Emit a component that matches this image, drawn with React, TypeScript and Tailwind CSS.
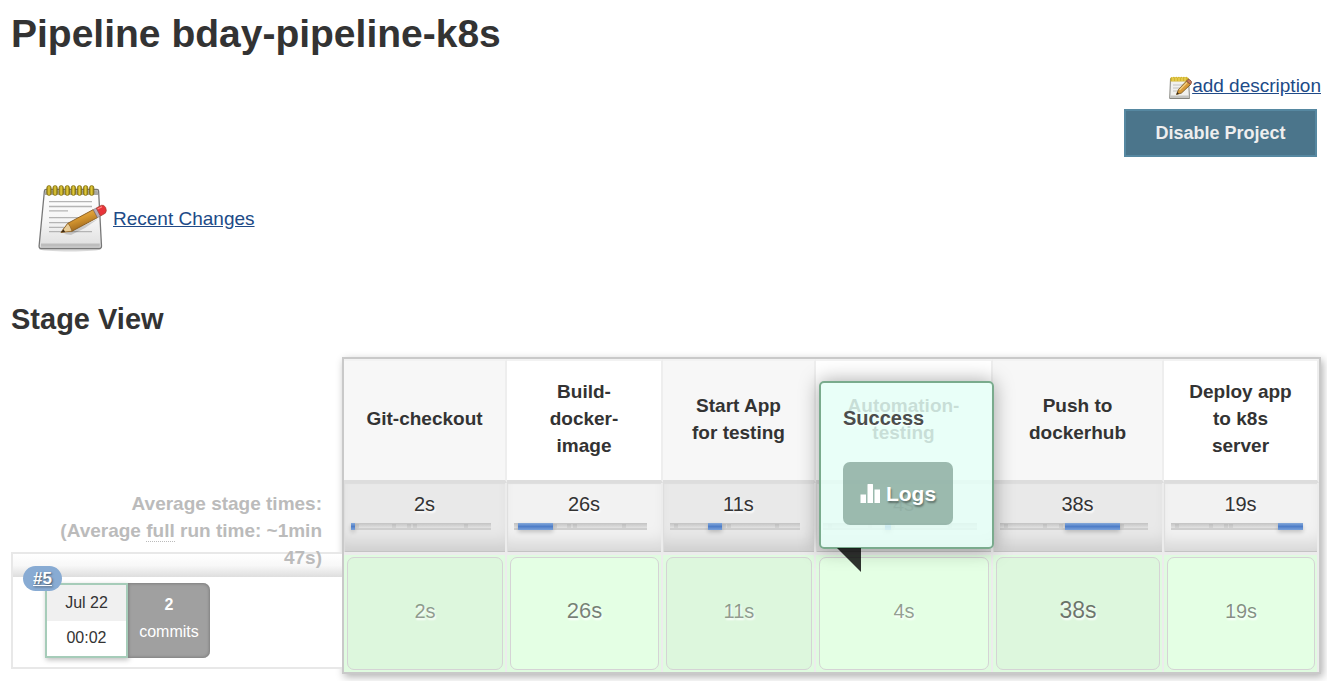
import React from "react";

type Stage = {
  name: string;
  average: string;
  start: number;
  span: number;
  run: string;
  runClass: string;
  colClass: string;
};

const stages: Stage[] = [
  { name: "Git-checkout", average: "2s", start: 0, span: 3, run: "2s", runClass: "text-[20px] text-black/40", colClass: "w-[163px]" },
  { name: "Build-docker-image", average: "26s", start: 3, span: 26, run: "26s", runClass: "text-[22px] text-black/50", colClass: "w-[156px]" },
  { name: "Start App for testing", average: "11s", start: 29, span: 11, run: "11s", runClass: "text-[20px] text-black/40", colClass: "w-[153px]" },
  { name: "Automation-testing", average: "4s", start: 40, span: 4, run: "4s", runClass: "text-[20px] text-black/40", colClass: "w-[177px]" },
  { name: "Push to dockerhub", average: "38s", start: 44, span: 37, run: "38s", runClass: "text-[23px] text-black/55", colClass: "w-[171px]" },
  { name: "Deploy app to k8s server", average: "19s", start: 81, span: 19, run: "19s", runClass: "text-[20px] text-black/45", colClass: "w-[155px]" },
];

function NotepadIcon({ className, id }: { className: string; id: string }) {
  return (
    <svg className={className} viewBox="0 0 70 70" aria-hidden="true">
      <defs>
        <linearGradient id={`${id}-paper`} x1="0" y1="0" x2="0" y2="1">
          <stop offset="0" stopColor="#ffffff" />
          <stop offset="0.5" stopColor="#f6f6f6" />
          <stop offset="1" stopColor="#dedede" />
        </linearGradient>
        <linearGradient id={`${id}-wood`} x1="0" y1="0" x2="0.5" y2="1">
          <stop offset="0" stopColor="#efc46e" />
          <stop offset="0.5" stopColor="#d99a32" />
          <stop offset="1" stopColor="#96601a" />
        </linearGradient>
        <linearGradient id={`${id}-ring`} x1="0" y1="0" x2="1" y2="0">
          <stop offset="0" stopColor="#9b8410" />
          <stop offset="0.5" stopColor="#e3cc3c" />
          <stop offset="1" stopColor="#8c760d" />
        </linearGradient>
      </defs>
      <ellipse cx="33" cy="66" rx="31" ry="2.5" fill="#000" opacity="0.15" />
      <path d="M9 6.500H60Q61.500 6.500 61.600 8L64.500 63Q64.500 65.500 62.500 65.500H4Q2 65.500 2.100 63L7.400 8Q7.600 6.500 9 6.500Z" fill={`url(#${id}-paper)`} stroke="#777" strokeWidth="1.300" />
      <path d="M8.300 7.200H60.700L61.200 12H7.800Z" fill="#a9a9a4" />
      <path d="M4 60.500H62.800V63.800H4Z" fill="#bdbdbd" />
      <path d="M12 18.700H55M12 23.500H55M12 27.800H31M12 34.700H52M12 39.700H45M12 44.300H32M12 48.700H55" stroke="#b4b4b4" strokeWidth="1.300" />
      {[0, 1, 2, 3, 4, 5, 6, 7].map((n) => (
        <rect key={n} x={9.8 + n * 6.1} y="2.600" width="4.400" height="9.800" rx="2.200" fill={`url(#${id}-ring)`} stroke="#7d6a10" strokeWidth="0.700" />
      ))}
      <path d="M27 51L61 36L48 45L34 52Z" fill="#000" opacity="0.16" />
      <path d="M31 40.200L56.300 26.600L60.500 34.600L35 48.200L24 49.300Z" fill={`url(#${id}-wood)`} stroke="#85581c" strokeWidth="0.900" strokeLinejoin="round" />
      <path d="M31 40.200L33.300 43.800L35 48.200L24 49.300Z" fill="#e9cd98" stroke="#85581c" strokeWidth="0.600" />
      <path d="M26.500 46.200L28.200 48.900L24 49.300Z" fill="#3c2a14" />
      <path d="M56.300 26.600L59.300 25L63.500 33L60.500 34.600Z" fill="#b9adb8" stroke="#80747d" strokeWidth="0.600" />
      <path d="M59.300 25L64.500 22.300Q67 21.500 68.600 24.500Q70.100 28.200 68.300 30.200L63.500 33Z" fill="#e8343a" stroke="#a64434" strokeWidth="0.800" />
      <path d="M60.600 26L65 23.700" stroke="#ff8d86" strokeWidth="1.200" />
    </svg>
  );
}

function SmallNotepadIcon() {
  return (
    <svg className="mt-1 h-6 w-[23px]" viewBox="0 0 23 24" aria-hidden="true">
      <path d="M1.500 2.500H19.500L20.500 22.500H0.700Z" fill="#f1f1ee" stroke="#85857f" strokeWidth="1" />
      <path d="M1.500 19.500H20.300V22H1Z" fill="#c4c4c0" />
      <path d="M4 9H16M4 12H11M4 15H9" stroke="#c2c2c0" strokeWidth="1" />
      <path d="M1.500 2Q2.500 0.500 3.500 1.500Q5 0 6 1.500Q7.500 0 8.500 1.500Q10 0 11 1.500Q12.500 0 13.500 1.500Q15 0 16 1.500Q17.500 0 18.500 1.500L19.500 2V5.500H1.500Z" fill="#d4b62c" />
      <path d="M4 2V5M7 2V5M10 2V5M13 2V5M16 2V5" stroke="#f1dc68" strokeWidth="1" />
      <path d="M7.500 18.500L9.500 13.500L17.500 5L21.500 8.500L12.500 17Z" fill="#d89a38" stroke="#7b5a22" strokeWidth="0.900" />
      <path d="M10.500 14L18 6.500" stroke="#f4cf84" strokeWidth="1.200" />
      <path d="M7.500 18.500L8.400 16L10 17.700Z" fill="#33271a" />
      <path d="M17.500 5L19 3.600Q21 3 22.400 5.500Q22.800 7 21.500 8.500Z" fill="#c97a5c" stroke="#7d4a38" strokeWidth="0.800" />
    </svg>
  );
}

function LogsIcon() {
  return (
    <svg className="h-5 w-[22px]" viewBox="0 0 22 20" aria-hidden="true">
      <path d="M0.500 10.500H6V19H0.500ZM7.500 0.500Q7.500 0 8 0H12.500Q13 0 13 0.500V19H7.500ZM14.500 5.500H20V19H14.500Z" fill="#fff" />
    </svg>
  );
}

function StagePopover() {
  return (
    <div role="dialog" aria-label="Stage result" className="absolute bottom-full left-[3px] z-10 mb-[6px] w-[175px] text-left [text-shadow:1px_1px_1px_#fff]">
      <div className="flex h-[168px] flex-col items-start rounded-[5px] border-2 border-[#7aab8d] bg-[#e5fff7]/84 px-[22px] pt-[22px] shadow-[0_0_20px_rgba(0,0,0,0.35)]">
        <p className="text-[20px] leading-[27px] font-bold text-[#4a4d4c]">Success</p>
        <button type="button" className="mt-[30px] flex h-[63px] w-[110px] items-center justify-center gap-1 rounded-[7px] bg-[#7b9c90]/70 text-[21px] font-bold text-white [text-shadow:1px_2px_2px_rgba(0,0,0,0.4)]">
          <LogsIcon />
          Logs
        </button>
      </div>
      <svg className="absolute top-full left-[18px] -mt-px h-6 w-6" viewBox="0 0 24 24" aria-hidden="true">
        <path d="M0 0H24V24Z" fill="#000" opacity="0.8" />
      </svg>
    </div>
  );
}

function Timeline({ stage }: { stage: Stage }) {
  return (
    <div className="relative mt-[5px] mr-[14px] ml-[7px] h-[7px] border-b-2 border-[#cecece] bg-linear-to-b from-[#c3c3c3] to-[#e2e2e2]">
      {stages.slice(1).map((s) => (
        <span key={s.name} className="absolute top-px h-1 w-1 bg-black/6" style={{ left: `${s.start}%` }} />
      ))}
      <span
        className="absolute top-0 h-[7px] bg-linear-to-b from-[#85a9da] via-[#4f7ec8] to-[#7ba2da] shadow-[0_2px_4px_rgba(0,0,0,0.2)]"
        style={{ left: `${stage.start}%`, width: `${stage.span}%` }}
      />
    </div>
  );
}

function StageTable() {
  return (
    <div className="min-w-0 flex-1 border-2 border-[#c9c9c9] shadow-[2px_3px_8px_rgba(0,0,0,0.3)]">
      <table className="w-full table-fixed border-separate border-spacing-0 text-center">
        <colgroup>
          {stages.map((s) => (
            <col key={s.name} className={s.colClass} />
          ))}
        </colgroup>
        <thead>
          <tr>
            {stages.map((s) => (
              <th key={s.name} scope="col" className="h-[124px] border-t-2 border-r-2 border-b-3 border-t-[#f2f2f2] border-r-[#eee] border-b-[#ddd] px-5 pb-1 text-[19px] leading-[27px] font-bold odd:bg-[#f7f7f7] even:bg-white">
                {s.name}
              </th>
            ))}
          </tr>
        </thead>
        <tbody>
          <tr>
            {stages.map((s) => (
              <td key={s.name} className="h-[72px] border-r-2 border-b-3 border-[#ececec] pt-2 align-top text-[20px] leading-[27px] shadow-[inset_1px_1px_1px_#ddd,inset_0_-1px_0_#c4c4c4,inset_0_-18px_18px_-10px_rgba(0,0,0,0.13)] [text-shadow:1px_2px_2px_#fff] odd:bg-[#e9e9e9] even:bg-[#f2f2f2]">
                {s.average}
                <Timeline stage={s} />
              </td>
            ))}
          </tr>
          <tr>
            {stages.map((s) => (
              <td key={s.name} className="group relative h-[117px] border-r-2 border-[#ececec] bg-[#e0fbe0] py-[2px] pr-[2px] pl-[3px]">
                <div className={`flex h-[113px] items-center justify-center rounded-[7px] border border-[#d5d3d5] pb-[6px] [text-shadow:1px_2px_2px_#fff] group-odd:bg-[#ddf7dd] group-even:bg-[#e4ffe4] ${s.runClass}`}>
                  {s.run}
                </div>
                {s.name === "Automation-testing" && <StagePopover />}
              </td>
            ))}
          </tr>
        </tbody>
      </table>
    </div>
  );
}

function RunSummary() {
  return (
    <div className="flex w-[331px] shrink-0 flex-col justify-end pb-[5px]">
      <div className="relative z-10 -mb-[19px] pr-5 pl-5 text-right text-[19px] leading-[27px] font-bold text-[#bbb]">
        <p>Average stage times:</p>
        <p>
          (Average <abbr title="Complete runs only" className="border-b border-dotted border-[#bbb] no-underline">full</abbr> run time: ~1min 47s)
        </p>
      </div>
      <div className="relative h-[117px] border-2 border-r-0 border-[#e8e8e8] bg-white">
        <div className="h-[23px] bg-linear-to-b from-white via-[#f8f8f8] to-[#dedede]" />
        <div className="mt-[6px] ml-8 flex h-[75px] text-center text-[16px]">
          <div className="flex w-[83px] flex-col border-2 border-[#a6ccb9] shadow-[1px_2px_5px_rgba(0,0,0,0.25)]">
            <div className="flex flex-1 items-center justify-center bg-[#f0f0f0]">Jul 22</div>
            <div className="flex flex-1 items-center justify-center bg-white">00:02</div>
          </div>
          <div className="w-[82px] rounded-r-[7px] bg-[#a0a0a0] pt-2 leading-[27px] text-white shadow-[inset_0_0_3px_1px_#808080]">
            <strong className="block">2</strong>
            commits
          </div>
        </div>
        <a href="#5" className="absolute top-3 left-[10px] flex h-[25px] w-[39px] items-center justify-center rounded-full bg-[#88abd3] text-[17px] font-bold text-white underline [text-shadow:1px_1px_2px_#456]">
          #5
        </a>
      </div>
    </div>
  );
}

export default function App() {
  return (
    <main className="bg-white pt-3 pr-[6px] pb-[7px] pl-[11px] font-['Liberation_Sans',Arial,sans-serif] text-[#333]">
      <h1 className="text-[39px] leading-[44px] font-bold">Pipeline bday-pipeline-k8s</h1>
      <div className="mt-4 flex flex-col items-end">
        <a href="#description" className="flex items-center text-[19px] leading-7 text-[#204a87] underline">
          <SmallNotepadIcon />
          add description
        </a>
        <button type="button" className="mt-[9px] mr-1 h-12 w-[193px] border-2 border-[#5688a1] bg-[#4b758b] text-[18px] font-bold text-[#eee]">
          Disable Project
        </button>
      </div>
      <div className="mt-[26px] ml-[26px] flex items-center">
        <NotepadIcon className="size-[70px]" id="large" />
        <a href="#changes" className="ml-[6px] text-[19px] leading-[27px] text-[#204a87] underline">Recent Changes</a>
      </div>
      <h2 className="mt-[50px] text-[29px] leading-8 font-bold">Stage View</h2>
      <section className="mt-[22px] flex" aria-label="Stage View">
        <RunSummary />
        <StageTable />
      </section>
    </main>
  );
}
